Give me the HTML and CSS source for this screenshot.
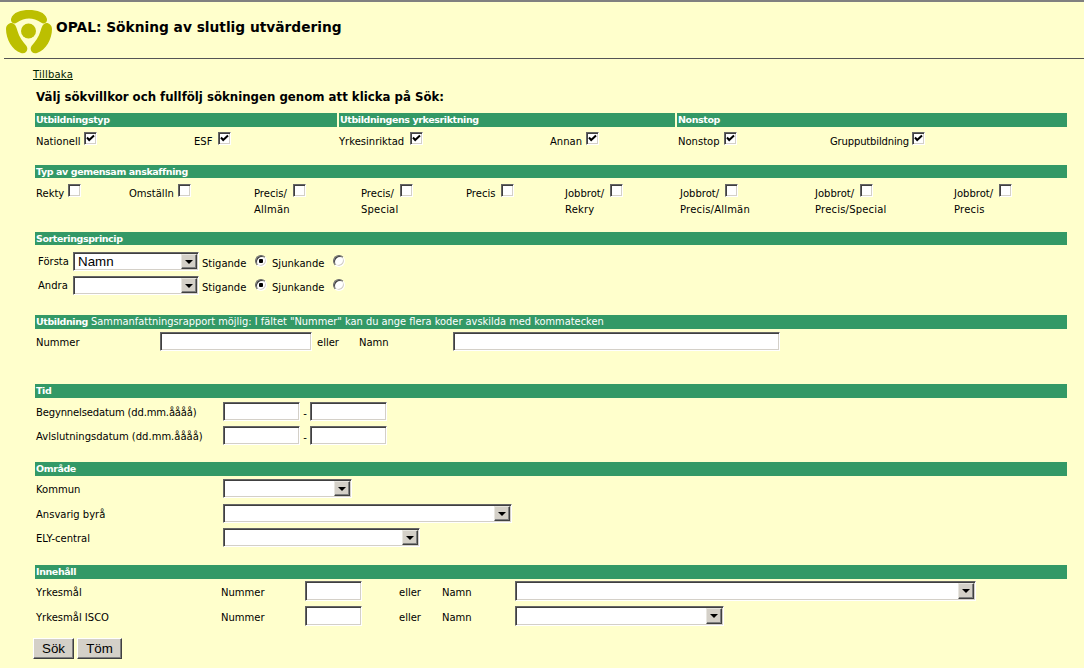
FILE: index.html
```html
<!DOCTYPE html>
<html lang="sv">
<head>
    <meta charset="UTF-8">
    <title>OPAL: Sökning av slutlig utvärdering</title>
    <link rel="stylesheet" href="styles.css">
</head>
<body>

<div class="header">
    <svg class="logo" width="47" height="46" viewBox="5 8 47 46">
        <path d="M11 19 C13 12 21 10 29 10 C37 10 45 12 47 19 C47.500 23 44 24.500 41 22.500 C37 19.800 33 18.500 29 18.500 C25 18.500 21 19.800 17 22.500 C14 24.500 10.500 23 11 19 Z" fill="#bcbf00"/>
        <path d="M6 29 C6 24.500 11 21.500 14 24 C16 25.500 16.500 28 17.500 31 C19 37 23 42 26.500 46 C29 50 25.500 54.500 21 53 C12 50 6 39 6 29 Z" fill="#bcbf00"/>
        <path d="M52 29 C52 24.500 47 21.500 44 24 C42 25.500 41.500 28 40.500 31 C39 37 35 42 31.500 46 C29 50 32.500 54.500 37 53 C46 50 52 39 52 29 Z" fill="#bcbf00"/>
        <circle cx="28.500" cy="31" r="7.500" fill="#bcbf00"/>
    </svg>
    <h1>OPAL: Sökning av slutlig utvärdering</h1>
</div>

<form class="page">
    <a class="back" href="#">Tillbaka</a>
    <h2>Välj sökvillkor och fullfölj sökningen genom att klicka på Sök:</h2>

    <!-- Utbildningstyp -->
    <div class="bars">
        <div class="bar">Utbildningstyp</div>
        <div class="bar">Utbildningens yrkesriktning</div>
        <div class="bar">Nonstop</div>
    </div>
    <div class="row-types">
        <label class="opt">Nationell <input type="checkbox" checked></label>
        <label class="opt wide">ESF <input type="checkbox" checked></label>
        <label class="opt wide">Yrkesinriktad <input type="checkbox" checked></label>
        <label class="opt">Annan <input type="checkbox" checked></label>
        <label class="opt">Nonstop <input type="checkbox" checked></label>
        <label class="opt tight">Grupputbildning <input type="checkbox" checked></label>
    </div>

    <!-- Anskaffning -->
    <div class="bar bar-thin sec-purchase">Typ av gemensam anskaffning</div>
    <div class="row-purchase">
        <div><label class="opt">Rekty <input type="checkbox"></label></div>
        <div><label class="opt">Omställn <input type="checkbox"></label></div>
        <div><label class="opt wide">Precis/ <input type="checkbox"></label><div class="sub">Allmän</div></div>
        <div><label class="opt wide">Precis/ <input type="checkbox"></label><div class="sub">Special</div></div>
        <div><label class="opt wide">Precis <input type="checkbox"></label></div>
        <div><label class="opt wide">Jobbrot/ <input type="checkbox"></label><div class="sub">Rekry</div></div>
        <div><label class="opt wide">Jobbrot/ <input type="checkbox"></label><div class="sub">Precis/Allmän</div></div>
        <div><label class="opt wide">Jobbrot/ <input type="checkbox"></label><div class="sub">Precis/Special</div></div>
        <div><label class="opt wide">Jobbrot/ <input type="checkbox"></label><div class="sub">Precis</div></div>
    </div>

    <!-- Sortering -->
    <div class="bar bar-thin sec-sort">Sorteringsprincip</div>
    <div class="row-sort first">
        <span class="sort-label">Första</span>
        <div class="combo w-sort"><select><option>Namn</option></select><span class="arrow"></span></div>
        <span class="low">Stigande</span>
        <input type="radio" name="s1" checked>
        <span class="low">Sjunkande</span>
        <input type="radio" name="s1">
    </div>
    <div class="row-sort">
        <span class="sort-label">Andra</span>
        <div class="combo w-sort"><select><option></option></select><span class="arrow"></span></div>
        <span class="low">Stigande</span>
        <input type="radio" name="s2" checked>
        <span class="low">Sjunkande</span>
        <input type="radio" name="s2">
    </div>

    <!-- Utbildning -->
    <div class="bar sec-edu"><b>Utbildning</b> Sammanfattningsrapport möjlig: I fältet "Nummer" kan du ange flera koder avskilda med kommatecken</div>
    <div class="row-edu">
        <span>Nummer</span>
        <input class="text" type="text">
        <span class="after-input">eller</span>
        <span>Namn</span>
        <input class="text" type="text">
    </div>

    <!-- Tid -->
    <div class="bar sec-time">Tid</div>
    <div class="row-time first">
        <span>Begynnelsedatum (dd.mm.åååå)</span>
        <input class="text" type="text">
        <span class="dash">-</span>
        <input class="text" type="text">
    </div>
    <div class="row-time">
        <span>Avlslutningsdatum (dd.mm.åååå)</span>
        <input class="text" type="text">
        <span class="dash">-</span>
        <input class="text" type="text">
    </div>

    <!-- Område -->
    <div class="bar sec-area">Område</div>
    <div class="row-area first">
        <span>Kommun</span>
        <div class="combo w-kommun"><select><option></option></select><span class="arrow"></span></div>
    </div>
    <div class="row-area">
        <span>Ansvarig byrå</span>
        <div class="combo w-byra"><select><option></option></select><span class="arrow"></span></div>
    </div>
    <div class="row-area last">
        <span>ELY-central</span>
        <div class="combo w-ely"><select><option></option></select><span class="arrow"></span></div>
    </div>

    <!-- Innehåll -->
    <div class="bar sec-content">Innehåll</div>
    <div class="row-content first">
        <span>Yrkesmål</span>
        <span>Nummer</span>
        <input class="text" type="text">
        <span>eller</span>
        <span>Namn</span>
        <div class="combo w-yrke"><select><option></option></select><span class="arrow"></span></div>
    </div>
    <div class="row-content">
        <span>Yrkesmål ISCO</span>
        <span>Nummer</span>
        <input class="text" type="text">
        <span>eller</span>
        <span>Namn</span>
        <div class="combo w-isco"><select><option></option></select><span class="arrow"></span></div>
    </div>

    <div class="actions">
        <button type="button" class="btn-search">Sök</button>
        <button type="button" class="btn-clear">Töm</button>
    </div>
</form>

</body>
</html>
```

FILE: styles.css
```css
* {
    margin: 0;
    padding: 0;
    box-sizing: border-box;
}

html, body {
    height: 100%;
    overflow: hidden;
}

body {
    background-color: #ffffcc;
    border-top: 2px solid #808080;
    color: #000;
    font-family: "DejaVu Sans", Verdana, sans-serif;
    font-size: 10px;
    line-height: 13px;
}

.header {
    display: flex;
    align-items: flex-start;
    height: 57px;
    margin-left: 4px;
    border-bottom: 1px solid #555;
}

.logo {
    margin: 6px 0 0 1px;
    flex: none;
}

h1 {
    margin: 16px 0 0 4px;
    font-size: 13.75px;
    line-height: 18px;
    font-weight: bold;
}

.page {
    width: 1032px;
    margin-left: 35px;
}

.back {
    display: block;
    width: 41px;
    margin: 9px 0 0 -2px;
    color: #002200;
    letter-spacing: 0.2px;
}

h2 {
    margin: 8px 0 0 1px;
    height: 24px;
    font-size: 11.75px;
    line-height: 16px;
    font-weight: bold;
}

.bars {
    display: grid;
    grid-template-columns: 302px 336px 390px;
    gap: 2px;
}

.bar {
    height: 14px;
    padding-left: 1px;
    background-color: #339966;
    color: #fff;
    font-size: 9.5px;
    letter-spacing: -0.4px;
    line-height: 14px;
    font-weight: bold;
    white-space: nowrap;
}

.bar-thin {
    height: 13px;
    line-height: 13px;
}

.sec-edu {
    font-size: 9.85px;
    letter-spacing: 0;
    font-weight: normal;
}

.sec-edu b {
    font-size: 9.5px;
    letter-spacing: -0.4px;
}

.sec-purchase { margin-top: 12px; }
.sec-sort { margin-top: 12px; }
.sec-edu { margin-top: 20px; }
.sec-time { margin-top: 33px; }
.sec-area { margin-top: 17px; }
.sec-content { margin-top: 18px; }

.opt {
    display: flex;
    align-items: flex-start;
    gap: 4px;
    line-height: 20px;
    white-space: nowrap;
}

.opt.wide { gap: 6px; }

.opt.tight {
    gap: 3px;
    letter-spacing: -0.15px;
}

.row-types {
    display: grid;
    grid-template-columns: 158px 145px 211px 128px 152px auto;
    height: 26px;
    padding: 5px 0 0 1px;
}

.row-purchase {
    display: grid;
    grid-template-columns: 93px 125px 107px 105px 99px 115px 135px 139px auto;
    height: 42px;
    padding: 6px 0 0 1px;
}

.sub {
    margin-top: -2px;
    line-height: 16px;
    letter-spacing: 0.2px;
}

input[type="checkbox"],
input[type="radio"] {
    appearance: none;
    flex: none;
    background-color: #fff;
    border: 1px solid;
    border-color: #666 #fff #fff #666;
    box-shadow: inset 1px 1px 0 #404040, inset -1px -1px 0 #d4d0c8;
}

input[type="checkbox"] {
    width: 13px;
    height: 13px;
}

input[type="checkbox"]:checked {
    background: #fff url("data:image/svg+xml,%3Csvg xmlns='http://www.w3.org/2000/svg' width='11' height='11'%3E%3Cpath d='M2 4.500 L4.200 7 L9 2.500' fill='none' stroke='%23000' stroke-width='2'/%3E%3C/svg%3E") no-repeat center;
}

input[type="radio"] {
    width: 12px;
    height: 12px;
    border-radius: 50%;
    margin-top: 3px;
}

input[type="radio"]:checked {
    background: radial-gradient(circle, #000 0 2px, #fff 2.500px);
}

.text {
    height: 100%;
    background-color: #fff;
    border: 1px solid;
    border-color: #666 #fff #fff #666;
    box-shadow: inset 1px 1px 0 #404040, inset -1px -1px 0 #d4d0c8;
    outline: none;
}

.combo {
    position: relative;
    height: 100%;
    background-color: #fff;
    border: 1px solid;
    border-color: #666 #fff #fff #666;
    box-shadow: inset 1px 1px 0 #404040, inset -1px -1px 0 #d4d0c8;
}

.combo select {
    appearance: none;
    width: 100%;
    height: 100%;
    padding-left: 4px;
    background: transparent;
    border: none;
    outline: none;
    font-family: "Liberation Sans", Arial, sans-serif;
    font-size: 13.33px;
    color: #000;
}

.arrow {
    position: absolute;
    top: 1px;
    right: 1px;
    bottom: 1px;
    width: 16px;
    background-color: #d4d0c8;
    border: 1px solid;
    border-color: #e8e6e0 #404040 #404040 #e8e6e0;
    box-shadow: inset -1px -1px 0 #808080;
    pointer-events: none;
}

.arrow::after {
    content: "";
    position: absolute;
    top: 5px;
    left: 3px;
    border: 4px solid transparent;
    border-top-color: #000;
    border-bottom: none;
}

.w-sort { width: 126px; }
.w-kommun { width: 129px; }
.w-byra { width: 289px; }
.w-ely { width: 197px; }
.w-yrke { width: 461px; }
.w-isco { width: 209px; }

.row-sort {
    display: grid;
    grid-template-columns: 35px 129px 53px 17px 61px auto;
    align-items: start;
    height: 19px;
    margin-top: 5px;
    padding-left: 3px;
}

.row-sort.first {
    margin-top: 7px;
}

.sort-label {
    padding-top: 3px;
}

.low {
    padding-top: 5px;
}

.row-edu {
    display: grid;
    grid-template-columns: 124px 152px 47px 94px 327px;
    align-items: center;
    height: 19px;
    margin-top: 3px;
    padding-left: 1px;
}

.row-edu span,
.row-time span,
.row-area > span:first-child,
.row-content > span {
    padding-top: 2px;
}

.row-edu .text {
    height: 19px;
}

.row-edu .after-input {
    padding-left: 5px;
}

.row-time {
    display: grid;
    grid-template-columns: 187px 77px 10px 77px;
    align-items: center;
    height: 19px;
    margin-top: 5px;
    padding-left: 1px;
}

.row-time.first {
    margin-top: 4px;
}

.row-time.first span:first-child {
    letter-spacing: -0.15px;
}

.row-time .dash {
    text-align: center;
    padding-top: 4px;
}

.row-area {
    display: grid;
    grid-template-columns: 187px auto;
    justify-items: start;
    align-items: center;
    height: 19px;
    margin-top: 6px;
    padding-left: 1px;
}

.row-area.first {
    margin-top: 3px;
}

.row-area.last {
    margin-top: 5px;
}

.row-content {
    display: grid;
    grid-template-columns: 185px 84px 94px 43px 73px auto;
    justify-items: start;
    align-items: center;
    height: 20px;
    margin-top: 5px;
    padding-left: 1px;
}

.row-content.first {
    margin-top: 2px;
}

.row-content .text {
    width: 57px;
}

.actions {
    display: flex;
    gap: 3px;
    margin: 12px 0 0 -2px;
}

.actions button {
    height: 21px;
    background-color: #d4d0c8;
    border: 1px solid;
    border-color: #fff #404040 #404040 #fff;
    box-shadow: inset -1px -1px 0 #808080;
    font-family: "Liberation Sans", Arial, sans-serif;
    font-size: 13.33px;
    color: #000;
}

.btn-search { width: 41px; }
.btn-clear { width: 45px; }
```
